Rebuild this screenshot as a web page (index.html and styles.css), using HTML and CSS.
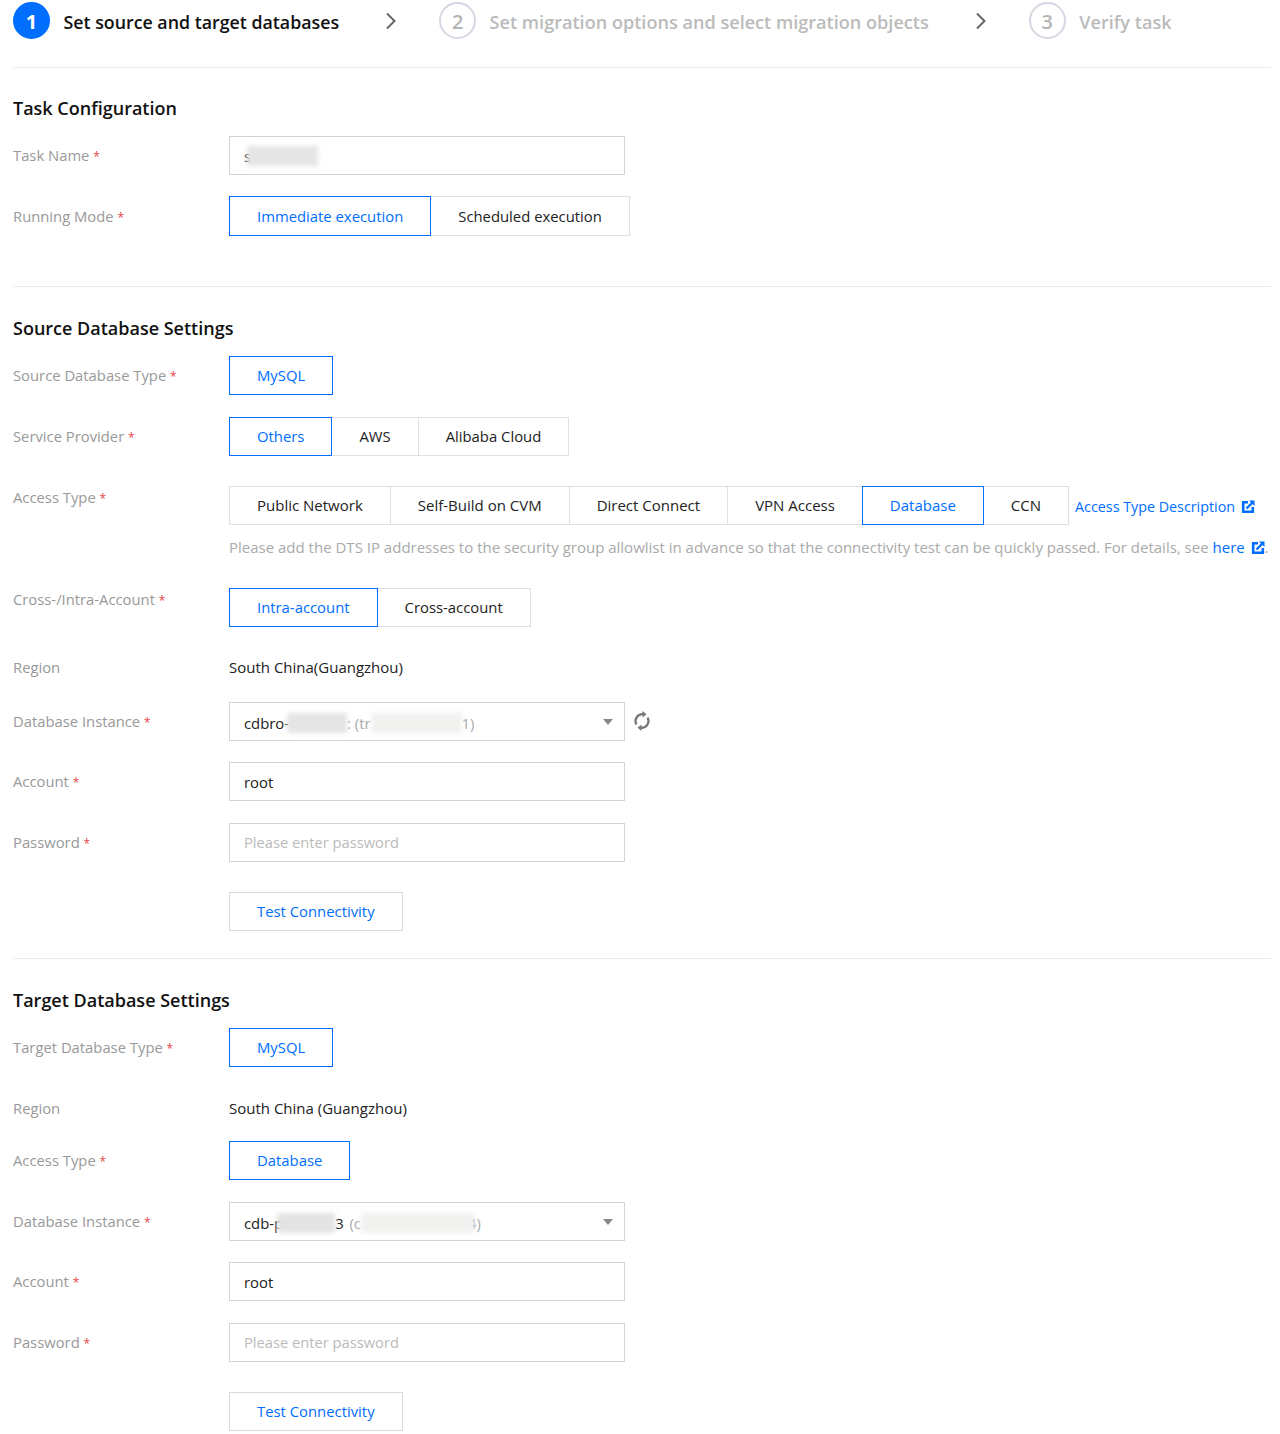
FILE: index.html
```html
<!DOCTYPE html>
<html lang="en">
<head>
<meta charset="utf-8">
<title>Set source and target databases</title>
<link rel="stylesheet" href="styles.css">
</head>
<body>
<svg class="defs" width="0" height="0" aria-hidden="true">
  <symbol id="ext" viewBox="0 0 14 14">
    <path d="M7 2.200H2.200v9.600h9.600V7" fill="none" stroke="#006eff" stroke-width="2.600"/>
    <path d="M5.500 8.500 L11.500 2.500" fill="none" stroke="#006eff" stroke-width="2.400"/>
    <path d="M8 0.500h5.500v5.500z" fill="#006eff"/>
  </symbol>
</svg>
<nav class="steps">
  <div class="step step-current"><span class="num">1</span><span class="step-text">Set source and target databases</span></div>
  <svg class="chev" viewBox="0 0 12 18" width="12" height="18"><path d="M2 1.500 L9.500 9 L2 16.500" fill="none" stroke="#666" stroke-width="2"/></svg>
  <div class="step"><span class="num">2</span><span class="step-text">Set migration options and select migration objects</span></div>
  <svg class="chev" viewBox="0 0 12 18" width="12" height="18"><path d="M2 1.500 L9.500 9 L2 16.500" fill="none" stroke="#666" stroke-width="2"/></svg>
  <div class="step"><span class="num">3</span><span class="step-text">Verify task</span></div>
</nav>

<section class="section first">
  <h2>Task Configuration</h2>
  <div class="row">
    <label class="lab">Task Name <i>*</i></label>
    <div class="input"><span>s</span><span class="blur b-task"></span></div>
  </div>
  <div class="row">
    <label class="lab">Running Mode <i>*</i></label>
    <div class="group"><span class="opt on">Immediate execution</span><span class="opt">Scheduled execution</span></div>
  </div>
</section>

<section class="section s-source">
  <h2>Source Database Settings</h2>
  <div class="row">
    <label class="lab">Source Database Type <i>*</i></label>
    <div class="group"><span class="opt on">MySQL</span></div>
  </div>
  <div class="row">
    <label class="lab">Service Provider <i>*</i></label>
    <div class="group"><span class="opt on">Others</span><span class="opt">AWS</span><span class="opt">Alibaba Cloud</span></div>
  </div>
  <div class="row r-access">
    <label class="lab lab-top">Access Type <i>*</i></label>
    <div class="col">
      <div class="inline">
        <div class="group tabs-wide"><span class="opt">Public Network</span><span class="opt">Self-Build on CVM</span><span class="opt">Direct Connect</span><span class="opt">VPN Access</span><span class="opt on">Database</span><span class="opt">CCN</span></div>
        <a class="link side">Access Type Description <svg class="ext"><use href="#ext"/></svg></a>
      </div>
      <p class="hint">Please add the DTS IP addresses to the security group allowlist in advance so that the connectivity test can be quickly passed. For details, see <a class="link">here <svg class="ext"><use href="#ext"/></svg></a>.</p>
    </div>
  </div>
  <div class="row r-cross">
    <label class="lab lab-top">Cross-/Intra-Account <i>*</i></label>
    <div class="group"><span class="opt on">Intra-account</span><span class="opt">Cross-account</span></div>
  </div>
  <div class="row r-text">
    <label class="lab">Region</label>
    <div class="value">South China(Guangzhou)</div>
  </div>
  <div class="row r-instance">
    <label class="lab">Database Instance <i>*</i></label>
    <div class="input select"><span>cdbro-</span><span class="blur b-a"></span><span class="mute">: (tr</span><span class="blur b-b"></span><span class="mute">1)</span><svg class="caret" viewBox="0 0 10 6" width="10" height="6"><path d="M0 0h10L5 6z" fill="#888"/></svg></div>
    <svg class="refresh" viewBox="0 0 18 20" width="18" height="20"><path d="M3.400 13.500A7 7 0 0 1 10 3.100M14.600 6.500A7 7 0 0 1 8 16.900" fill="none" stroke="#777" stroke-width="2.200"/><path d="M9.500 0v6.400l4-3.200zM8.500 20v-6.400l-4 3.200z" fill="#777"/></svg>
  </div>
  <div class="row">
    <label class="lab">Account <i>*</i></label>
    <div class="input">root</div>
  </div>
  <div class="row">
    <label class="lab">Password <i>*</i></label>
    <div class="input ph">Please enter password</div>
  </div>
  <div class="row r-btn">
    <span class="lab"></span>
    <button class="btn">Test Connectivity</button>
  </div>
</section>

<section class="section s-target">
  <h2>Target Database Settings</h2>
  <div class="row">
    <label class="lab">Target Database Type <i>*</i></label>
    <div class="group"><span class="opt on">MySQL</span></div>
  </div>
  <div class="row r-text">
    <label class="lab">Region</label>
    <div class="value">South China (Guangzhou)</div>
  </div>
  <div class="row r-tacc">
    <label class="lab">Access Type <i>*</i></label>
    <div class="group"><span class="opt on">Database</span></div>
  </div>
  <div class="row">
    <label class="lab">Database Instance <i>*</i></label>
    <div class="input select"><span>cdb-p</span><span class="blur b-c"></span><span>3</span><span class="mute gap">&nbsp;(c</span><span class="blur b-d"></span><span class="mute">4)</span><svg class="caret" viewBox="0 0 10 6" width="10" height="6"><path d="M0 0h10L5 6z" fill="#888"/></svg></div>
  </div>
  <div class="row">
    <label class="lab">Account <i>*</i></label>
    <div class="input">root</div>
  </div>
  <div class="row">
    <label class="lab">Password <i>*</i></label>
    <div class="input ph">Please enter password</div>
  </div>
  <div class="row r-btn">
    <span class="lab"></span>
    <button class="btn">Test Connectivity</button>
  </div>
</section>
</body>
</html>
```
FILE: styles.css
```css
* { box-sizing: border-box; }
html, body { margin: 0; background: #fff; }
body {
  padding: 3px 9px 0 13px;
  height: 1434px;
  overflow: hidden;
  font-family: "Open Sans", "Noto Sans", sans-serif;
  font-size: 14.85px;
  color: #222;
}
.defs { position: absolute; }
.steps {
  display: flex;
  align-items: center;
  height: 65px;
  padding-bottom: 29px;
  border-bottom: 1px solid #e8eaed;
}
.step { display: flex; align-items: center; gap: 13.5px; }
.num {
  width: 37px; height: 37px;
  border-radius: 50%;
  border: 2px solid #d3d8e2;
  color: #b4b4b4;
  font-size: 20px;
  font-weight: 600;
  padding-top: 1px;
  display: flex; align-items: center; justify-content: center;
}
.step-text { font-size: 18.1px; font-weight: 600; color: #bbb; white-space: nowrap; padding-top: 2px; }
.step-current .num { background: #006eff; border-color: #006eff; color: #fff; font-weight: 700; }
.step-current .step-text { color: #111; font-size: 17.8px; }
.chev { margin: 0 42px 0 46px; }
.section { border-bottom: 1px solid #e8eaed; }
.section.first { padding-bottom: 29px; }
.first h2 { padding-top: 27px; }
.first .row { margin-bottom: 21px; }
.first .opt { height: 40px; line-height: 38px; }
.s-source { padding-bottom: 27px; }
.s-target { border-bottom: 0; }
h2 { margin: 0 0 15px; font-size: 18px; font-weight: 600; line-height: 26px; color: #111; padding-top: 28px; }
.row { display: flex; align-items: center; margin-bottom: 21.5px; min-height: 39px; }
.lab { width: 216px; flex: none; color: #999; padding-bottom: 1px; white-space: nowrap; font-size: 14.8px; }
.lab i { color: #e54545; font-style: normal; font-size: 12px; }
.lab-top { align-self: flex-start; padding-bottom: 0; line-height: 23px; }
.input {
  width: 396px; height: 39px;
  border: 1px solid #cfd5de;
  padding: 0 14px;
  display: flex; align-items: center;
  white-space: pre;
  color: #222;
}
.ph { color: #bbb; font-size: 14.7px; }
.select { position: relative; padding-top: 3px; }
.caret { position: absolute; right: 11px; top: 16px; }
.mute { color: #aaa; }
.gap { margin-left: 2px; }
.blur { display: inline-block; height: 20px; background: #e4e5e4; filter: blur(2px); }
.b-task { width: 71px; margin-left: -4px; }
.b-a { width: 60px; margin-left: -2px; }
.b-b { width: 91px; background: #f1f1f0; }
.b-c { width: 58px; margin-left: -6px; background: #e4e4e4; }
.b-d { width: 113px; margin-right: -6px; background: #f1f1f0; }
.refresh { margin-left: 8px; }
.group { display: flex; }
.tabs-wide { font-size: 15px; }
.opt {
  display: block;
  height: 39px; line-height: 37px;
  padding: 0 27px;
  border: 1px solid #dde0e6;
  margin-left: -1px;
  white-space: nowrap;
  color: #222;
  position: relative;
}
.opt:first-child { margin-left: 0; }
.opt.on { border-color: #006eff; color: #006eff; z-index: 1; }
.col { display: flex; flex-direction: column; }
.inline { display: flex; align-items: center; }
.link { color: #006eff; white-space: nowrap; }
.side { margin-left: 6px; padding-top: 3px; font-size: 14.3px; }
.ext { width: 14px; height: 14px; vertical-align: -2px; margin-left: 2px; }
.hint { margin: 11px 0 0; color: #aaa; white-space: nowrap; line-height: 22px; font-size: 15px; }
.r-access { margin-top: 30px; margin-bottom: 30px; }
.r-text { min-height: 20px; margin-top: 30px; }
.s-target .r-text { padding-top: 1px; }
.value { font-size: 15px; }
.r-instance { margin-top: 24px; }
.r-cross { margin-bottom: 0; }
.r-tacc { margin-top: 22px; margin-bottom: 22px; }
.btn {
  height: 39px;
  padding: 0 27px;
  background: #fff;
  border: 1px solid #d7dbe2;
  color: #006eff;
  font: inherit;
}
.r-btn { margin-top: 30px; margin-bottom: 0; }
```
